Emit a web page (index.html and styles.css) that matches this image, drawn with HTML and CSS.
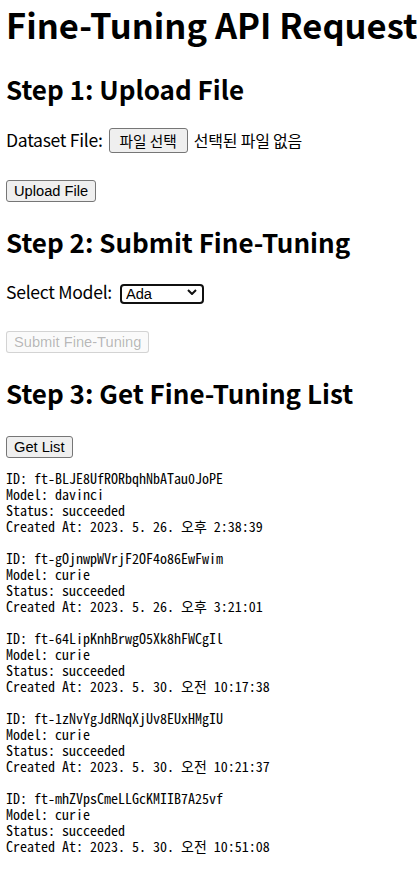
FILE: index.html
```html
<!DOCTYPE html>
<html lang="en">
<head>
  <meta charset="UTF-8" />
  <meta name="viewport" content="width=device-width, initial-scale=1.0"/>
  <title>Fine-Tuning API Request</title>
  <link rel="stylesheet" href="styles.css">
</head>
<body>

  <h1>Fine-Tuning API Request</h1>

  <h2>Step 1: Upload File</h2>
  <div class="field">
    <label for="file">Dataset File:</label>
    <button class="btn file-btn" id="file">파일 선택</button>
    <span class="file-name">선택된 파일 없음</span>
  </div>
  <button class="btn step-btn">Upload File</button>

  <h2>Step 2: Submit Fine-Tuning</h2>
  <div class="field field-select">
    <label for="model">Select Model:</label>
    <div class="select-wrap">
      <select id="model">
        <option>Ada</option>
        <option>Babbage</option>
        <option>Curie</option>
        <option>Davinci</option>
      </select>
      <svg class="chevron" width="10" height="6" viewBox="0 0 10 6">
        <path d="M1 1 L5 5 L9 1" fill="none" stroke="#101010" stroke-width="2"/>
      </svg>
    </div>
  </div>
  <button class="btn step-btn" disabled>Submit Fine-Tuning</button>

  <h2>Step 3: Get Fine-Tuning List</h2>
  <button class="btn step-btn">Get List</button>

  <div class="job-list">
    <div class="job">
      <div>ID: ft-BLJE8UfRORbqhNbATau0JoPE</div>
      <div>Model: davinci</div>
      <div>Status: succeeded</div>
      <div>Created At: 2023. 5. 26. 오후 2:38:39</div>
    </div>
    <div class="job">
      <div>ID: ft-gOjnwpWVrjF2OF4o86EwFwim</div>
      <div>Model: curie</div>
      <div>Status: succeeded</div>
      <div>Created At: 2023. 5. 26. 오후 3:21:01</div>
    </div>
    <div class="job">
      <div>ID: ft-64LipKnhBrwgO5Xk8hFWCgIl</div>
      <div>Model: curie</div>
      <div>Status: succeeded</div>
      <div>Created At: 2023. 5. 30. 오전 10:17:38</div>
    </div>
    <div class="job">
      <div>ID: ft-1zNvYgJdRNqXjUv8EUxHMgIU</div>
      <div>Model: curie</div>
      <div>Status: succeeded</div>
      <div>Created At: 2023. 5. 30. 오전 10:21:37</div>
    </div>
    <div class="job">
      <div>ID: ft-mhZVpsCmeLLGcKMIIB7A25vf</div>
      <div>Model: curie</div>
      <div>Status: succeeded</div>
      <div>Created At: 2023. 5. 30. 오전 10:51:08</div>
    </div>
  </div>

</body>
</html>
```

FILE: styles.css
```css
body {
  margin: 0;
  padding: 0 6px;
  font-family: "Noto Sans CJK KR", "Noto Sans", sans-serif;
  font-size: 17.6px;
  color: #000;
  background: #fff;
  white-space: nowrap;
}

h1 {
  margin: 2px 0 0;
  font-size: 34.5px;
  line-height: 44px;
  font-weight: 700;
}

h2 {
  margin: 27px 0 0;
  font-size: 26px;
  line-height: 32px;
  font-weight: 700;
}

.field {
  display: flex;
  align-items: baseline;
  gap: 6px;
  margin-top: 23px;
  line-height: 20px;
}

.field label {
  letter-spacing: -0.3px;
}

.field-select {
  margin-top: 24px;
}

.field + .step-btn {
  margin-top: 27px;
}

.step-btn + h2 {
  margin-top: 24px;
}

h2 + .step-btn {
  margin-top: 27px;
}

.btn {
  display: block;
  font-family: "Liberation Sans", "Noto Sans CJK KR", sans-serif;
  font-size: 14.67px;
  line-height: 18px;
  padding: 1px 7px;
  color: #000;
  background: #efefef;
  border: 1px solid #767676;
  border-radius: 3px;
}

.btn:disabled {
  color: rgba(16, 16, 16, 0.3);
  background: rgba(239, 239, 239, 0.3);
  border-color: rgba(118, 118, 118, 0.3);
}

.file-btn {
  display: inline-block;
  line-height: 21px;
  padding: 1px 10px;
  font-family: "Noto Sans CJK KR", sans-serif;
}

.file-name {
  font-size: 16px;
  letter-spacing: -0.2px;
}

.select-wrap {
  position: relative;
  margin-left: 2px;
}

.select-wrap select {
  appearance: none;
  width: 84px;
  height: 20px;
  padding: 0 0 0 4px;
  font-family: "Liberation Sans", sans-serif;
  font-size: 14.67px;
  color: #000;
  background: #fff;
  border: 2px solid #101010;
  border-radius: 4px;
}

.chevron {
  position: absolute;
  right: 7px;
  top: 7px;
}

.job-list {
  margin-top: 12px;
  font-family: "Noto Sans Mono CJK KR", "DejaVu Sans Mono", monospace;
  font-size: 14px;
  line-height: 16px;
}

.job {
  margin-bottom: 16px;
}
```
